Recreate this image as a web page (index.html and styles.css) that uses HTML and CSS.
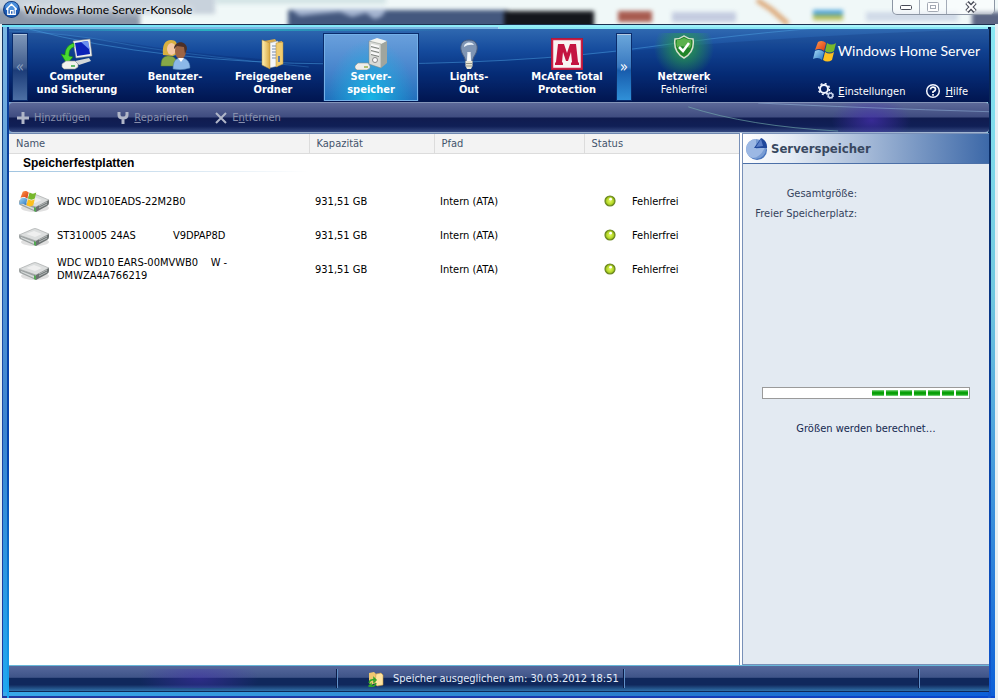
FILE: index.html
```html
<!DOCTYPE html>
<html lang="de">
  <head>
    <meta charset="UTF-8" />
    <meta name="viewport" content="width=device-width, initial-scale=1.0" />
    <title>Windows Home Server-Konsole</title>
    <link rel="stylesheet" href="styles.css">
  </head>
  <body>
    <!-- shared symbols -->
    <svg class="defs" width="0" height="0" aria-hidden="true">
      <defs>
        <linearGradient id="folderFill" x1="0" y1="0" x2="1" y2="0">
          <stop offset="0" stop-color="#fff0b4" />
          <stop offset="1" stop-color="#d9a840" />
        </linearGradient>
        <radialGradient id="ledFill" cx="0.5" cy="0.5" r="0.55">
          <stop offset="0" stop-color="#e4f860" />
          <stop offset="0.6" stop-color="#b4d828" />
          <stop offset="1" stop-color="#6c8c14" />
        </radialGradient>
        <linearGradient id="flagRed" x1="0" y1="0" x2="1" y2="1">
          <stop offset="0" stop-color="#ff9a4c" />
          <stop offset="1" stop-color="#d83810" />
        </linearGradient>
        <linearGradient id="flagBlue" x1="0" y1="0" x2="1" y2="1">
          <stop offset="0" stop-color="#a8dcf8" />
          <stop offset="1" stop-color="#2874c0" />
        </linearGradient>
      </defs>
      <symbol id="flag" viewBox="0 0 24 22">
        <path fill="url(#flagRed)" d="M5 2C8 0 11 1 13 3L11 11C9 9 6 8 2 10Z" />
        <path fill="#78b82c" d="M14 3C17 5 20 5 23 3L21 11C18 13 15 13 12 11Z" />
        <path fill="url(#flagBlue)" d="M2 11C6 9 8 10 11 12L9 20C7 18 4 17 0 19Z" />
        <path fill="#fcc020" d="M12 12C15 14 18 14 21 12L19 20C16 22 13 22 10 20Z" />
      </symbol>
      <symbol id="disk" viewBox="0 0 32 20">
        <ellipse cx="17" cy="15" rx="14" ry="4" fill="#000" opacity="0.12" />
        <path fill="#dcdede" stroke="#9a9e9e" stroke-width="0.6" d="M1 8L15 2Q17 1 19 2L31 7L18 14Z" />
        <path fill="#9da2a2" d="M1 8L18 14V19L2 12Q1 11 1 10Z" />
        <path fill="#6c7272" d="M18 14L31 7V10Q31 12 29 13L18 19Z" />
        <path fill="#d6dada" d="M3 10L16 15V17L3 11Z" />
        <path fill="#f6f6f6" d="M8 7L16 4L24 7L17 10Z" opacity="0.7" />
        <path fill="#52a852" d="M16 14L18 15V19L16 18Z" />
        <path stroke="#c8cccc" stroke-width="0.8" d="M21 13L29 9M21 15L29 11" />
      </symbol>
      <symbol id="led" viewBox="0 0 12 12">
        <circle cx="6" cy="6" r="5" fill="url(#ledFill)" stroke="#6c8820" stroke-width="1.2" />
        <circle cx="6.6" cy="4.2" r="1.4" fill="#fff" />
      </symbol>
    </svg>

    <div class="window">
      <header class="titlebar">
        <svg class="backdrop" aria-hidden="true">
          <rect x="0" y="0" width="100%" height="24" fill="#f0f8f8" />
          <g class="blur">
            <rect x="-10" y="-6" width="225" height="20" fill="#c8d2dc" />
            <rect x="-10" y="10" width="150" height="20" fill="#8c98aa" />
            <rect x="216" y="-6" width="170" height="10" fill="#d4e4e6" />
            <rect x="288" y="10" width="220" height="20" fill="#44587e" />
            <path d="M290 9H386Q384 18 374 19L366 13L352 17L340 12L318 14L300 16Z" fill="#a4b4d0" />
            <rect x="504" y="11" width="90" height="20" fill="#14161c" />
            <rect x="618" y="11" width="34" height="11" fill="#a85c50" />
            <rect x="672" y="12" width="64" height="10" fill="#c4cce0" />
            <path d="M757 0L772 10L788 24" stroke="#dca878" stroke-width="5" fill="none" />
            <rect x="813" y="10" width="30" height="5" fill="#4ea4d8" />
            <rect x="813" y="15" width="30" height="5" fill="#b4bc50" />
            <rect x="866" y="12" width="92" height="9" fill="#d0dae8" />
            <rect x="972" y="12" width="40" height="20" fill="#5c6684" />
          </g>
        </svg>
        <svg class="app-icon" viewBox="0 0 16 16" aria-hidden="true">
          <circle cx="8" cy="8" r="7.5" fill="#1a5ab4" stroke="#123c80" />
          <ellipse cx="8" cy="5" rx="6" ry="4" fill="#4c90dc" />
          <path d="M3 8L8 3L13 8M4.500 7V12.500H11.500V7M7 12V9H9.500V12" fill="none" stroke="#fff" stroke-width="1.200" />
        </svg>
        <h1>Windows Home Server-Konsole</h1>
        <div class="caption-buttons">
          <button type="button" aria-label="Minimieren">
            <svg width="14" height="8" viewBox="0 0 14 8"><rect x="1.500" y="2.500" width="11" height="4" rx="1" fill="#fff" stroke="#484c58" /></svg>
          </button>
          <button type="button" aria-label="Maximieren" disabled>
            <svg width="12" height="10" viewBox="0 0 12 10"><rect x="0.500" y="0.500" width="11" height="9" rx="1" fill="#fff" stroke="#a4aab4" /><rect x="3.500" y="3.500" width="5" height="3" fill="none" stroke="#a4aab4" /></svg>
          </button>
          <button type="button" class="close" aria-label="Schließen">
            <svg width="14" height="12" viewBox="0 0 14 12"><path d="M3 1.500L11 10.500M11 1.500L3 10.500" stroke="#484c58" stroke-width="4.500" /><path d="M3 2L11 10M11 2L3 10" stroke="#fff" stroke-width="2" /></svg>
          </button>
        </div>
      </header>

      <div class="frame">
        <div class="ribbon">
          <svg class="swoosh" viewBox="0 0 981 73" preserveAspectRatio="none" aria-hidden="true">
            <path d="M0 0L120 14Q210 30 330 34T620 22T981 0V73H0Z" fill="#001050" opacity="0.16" />
            <path d="M20 0Q150 34 330 35T640 18T860 -4" fill="none" stroke="#4ca0e0" stroke-width="1" opacity="0.5" />
            <path d="M0 2Q60 4 110 14T300 38" fill="none" stroke="#4ca0e0" stroke-width="1" opacity="0.3" />
          </svg>
          <button type="button" class="scroll" aria-label="Zurück" disabled>«</button>
          <nav class="tabs">
            <button type="button" class="tab">
              <svg viewBox="0 0 32 32" aria-hidden="true">
                <path d="M12 3L29 1L31 18L15 20Z" fill="#eef0ee" stroke="#888" stroke-width="0.500" />
                <path d="M14 5L27 3L29 16L16 18Z" fill="#0c22b8" />
                <path d="M20 4L27 3L29 12Z" fill="#6c90f0" />
                <path d="M14 23L28 20L30 23L18 27Z" fill="#d4d8d8" />
                <path d="M13 5C6 7 4 12 4 17L0 16L6 26L12 19L8 18C8 13 9 10 13 9Z" fill="#48d830" stroke="#168010" stroke-width="0.600" />
                <path d="M1 26L5 23H14L17 26V29L14 31H3L1 29Z" fill="#f2f2ec" stroke="#9a9c98" stroke-width="0.600" />
                <path d="M10 28H14" stroke="#34a840" stroke-width="1.500" />
              </svg>
              <span>Computer<br>und Sicherung</span>
            </button>
            <button type="button" class="tab">
              <svg viewBox="0 0 32 32" aria-hidden="true">
                <path d="M2 28C2 20 5 18 10 18S18 21 19 28Z" fill="#86a848" stroke="#5c7c28" stroke-width="0.500" />
                <path d="M4 17C3 7 6 2 12 2S19 6 18 16L14 18Z" fill="#d8b040" />
                <ellipse cx="12.500" cy="11" rx="4.500" ry="6" fill="#f4c8a4" />
                <path d="M14 31C14 23 17 20 22 20S31 23 31 30Q23 33 14 31Z" fill="#8cb8e8" stroke="#4c7cac" stroke-width="0.500" />
                <ellipse cx="21.500" cy="13" rx="5.500" ry="8" fill="#9c6444" />
                <path d="M15 11C15 2 28 2 28 11L26 16L25 9L18 8Z" fill="#4c3028" />
                <path d="M19 20L22 24L25 20Z" fill="#fff" />
              </svg>
              <span>Benutzer-<br>konten</span>
            </button>
            <button type="button" class="tab">
              <svg viewBox="0 0 32 32" aria-hidden="true">
                <path d="M7 3L18 1L20 4L25 3V25L18 29Z" fill="#d8aa4c" />
                <path d="M12 5L21 3V28L12 30Z" fill="#f4f6fa" stroke="#9aa4ac" stroke-width="0.500" />
                <path d="M15 8H19M15 11H19M15 14H19M15 17H19M15 20H19" stroke="#788cac" />
                <path d="M5 2L13 5V31L5 27Z" fill="url(#folderFill)" stroke="#b48c38" stroke-width="0.500" />
                <path d="M19 5L26 4V26L19 29Z" fill="#f0cc70" stroke="#b48c38" stroke-width="0.500" />
                <path d="M22 18V24" stroke="#607ca8" stroke-width="2" />
              </svg>
              <span>Freigegebene<br>Ordner</span>
            </button>
            <button type="button" class="tab active" aria-current="page">
              <svg viewBox="0 0 32 32" aria-hidden="true">
                <path d="M14 3L22 0L32 3L26 7Z" fill="#f4f4f0" />
                <path d="M14 3L26 6V30L14 26Z" fill="#d8dad6" stroke="#82867f" stroke-width="0.500" />
                <path d="M26 6L32 3V25L26 30Z" fill="#a0a59e" />
                <path d="M16 7L24 9M16 11L24 13M16 15L24 17" stroke="#fafafa" stroke-width="2.500" />
                <path d="M16 8.500L24 10.500M16 12.500L24 14.500M16 16.500L24 18.500" stroke="#7c807c" />
                <circle cx="20" cy="22" r="2.500" fill="#fafafa" stroke="#888" />
                <path d="M0 28L3 25H13L15 28V30L12 32H2L0 30Z" fill="#eeeeea" stroke="#92968e" stroke-width="0.600" />
                <path d="M9 29H13" stroke="#9cb048" stroke-width="1.500" />
              </svg>
              <span>Server-<br>speicher</span>
            </button>
            <button type="button" class="tab">
              <svg viewBox="0 0 32 32" aria-hidden="true">
                <path d="M16 2C9 2 7 7 8 12C9 17 12 18 12.500 24H19.500C20 18 23 17 24 12C25 7 23 2 16 2Z" fill="#7f95b4" stroke="#45597c" />
                <path d="M11 9C11 4 19 3 21 7Q15 6 11 9Z" fill="#e8f0f8" />
                <path d="M14.500 23L15 14L16 16L17 14L17.500 23" fill="#f4f8fc" stroke="#f4f8fc" />
                <path d="M12.500 23H19.500V28L18 31H14L12.500 28Z" fill="#e6e4d4" />
                <path d="M12.500 25.500H19.500M12.500 28H19.500" stroke="#94968c" />
              </svg>
              <span>Lights-<br>Out</span>
            </button>
            <button type="button" class="tab">
              <svg viewBox="0 0 32 32" aria-hidden="true">
                <rect x="0.500" y="0.500" width="31" height="31" fill="#f8f4f2" stroke="#a81838" />
                <rect x="1.500" y="1.500" width="29" height="29" fill="none" stroke="#cc2048" stroke-width="1.500" />
                <path d="M4 27V25L5 24L7 6H13L16 15L19 6H25L27 24L28 25V27H20V25L21 24L20 14L17 23H15L12 14L11 24L12 25V27Z" fill="#c41440" />
              </svg>
              <span>McAfee Total<br>Protection</span>
            </button>
          </nav>
          <button type="button" class="scroll next" aria-label="Weiter">»</button>
          <button type="button" class="network">
            <svg viewBox="0 0 22 24" aria-hidden="true">
              <path d="M11 1Q15 4 20 4Q22 17 11 23Q0 17 2 4Q7 4 11 1Z" fill="#1f8428" stroke="#d8e0d0" stroke-width="1.500" />
              <path d="M11 3Q15 5 18 5Q19 10 17 13Q10 10 4 12Q3 9 4 5Q7 5 11 3Z" fill="#74c45c" opacity="0.700" />
              <path d="M6 12L10 16L16 8" fill="none" stroke="#fff" stroke-width="2.500" />
            </svg>
            <strong>Netzwerk</strong>
            <span>Fehlerfrei</span>
          </button>
          <div class="brand">
            <div class="logo">
              <svg width="24" height="22" aria-hidden="true"><use href="#flag" /></svg>
              <span>Windows Home Server</span>
            </div>
            <div class="links">
              <a href="#einstellungen">
                <svg width="16" height="16" viewBox="0 0 16 16" aria-hidden="true">
                  <circle cx="6" cy="6" r="4" fill="none" stroke="#f0f4ff" stroke-width="2" />
                  <circle cx="6" cy="6" r="5.500" fill="none" stroke="#f0f4ff" stroke-width="1.500" stroke-dasharray="2 2.320" />
                  <circle cx="12.500" cy="12.500" r="2.200" fill="none" stroke="#c8d4ec" stroke-width="1.500" />
                  <circle cx="12.500" cy="12.500" r="3.200" fill="none" stroke="#c8d4ec" stroke-dasharray="1.300 1.200" />
                </svg>
                <span><u>E</u>instellungen</span>
              </a>
              <a href="#hilfe">
                <svg width="16" height="16" viewBox="0 0 16 16" aria-hidden="true">
                  <circle cx="8" cy="8" r="6.300" fill="none" stroke="#f4f6ff" stroke-width="1.500" />
                  <path d="M5.500 6.500Q5.500 4.200 8 4.200T10.500 6.400Q10.500 7.600 8 8.800V10M8 11V12.700" fill="none" stroke="#fff" stroke-width="1.700" />
                </svg>
                <span><u>H</u>ilfe</span>
              </a>
            </div>
          </div>
        </div>

        <div class="toolbar">
          <svg class="swoosh" viewBox="0 0 981 30" preserveAspectRatio="none" aria-hidden="true">
            <path d="M680 4Q740 24 830 29" fill="none" stroke="#78b4b0" opacity="0.600" />
            <path d="M750 0Q850 5 981 9" fill="none" stroke="#98bce0" opacity="0.500" />
          </svg>
          <button type="button" disabled>
            <svg width="14" height="14" viewBox="0 0 14 14" aria-hidden="true"><path d="M7 1V13M1 7H13" stroke="currentColor" stroke-width="3" /></svg>
            <span>H<u>i</u>nzufügen</span>
          </button>
          <button type="button" disabled>
            <svg width="14" height="14" viewBox="0 0 14 14" aria-hidden="true"><path d="M3 1V4Q3 7 7 7T11 4V1M7 6V13" fill="none" stroke="currentColor" stroke-width="3" /></svg>
            <span><u>R</u>eparieren</span>
          </button>
          <button type="button" disabled>
            <svg width="14" height="14" viewBox="0 0 14 14" aria-hidden="true"><path d="M2 2L12 12M12 2L2 12" stroke="currentColor" stroke-width="2" /></svg>
            <span>E<u>n</u>tfernen</span>
          </button>
        </div>

        <main class="content">
          <section class="list">
            <table>
              <colgroup>
                <col class="col-name">
                <col class="col-size">
                <col class="col-path">
                <col>
              </colgroup>
              <thead>
                <tr>
                  <th scope="col">Name</th>
                  <th scope="col">Kapazität</th>
                  <th scope="col">Pfad</th>
                  <th scope="col">Status</th>
                </tr>
              </thead>
              <tbody>
                <tr class="group">
                  <th colspan="4" scope="rowgroup">Speicherfestplatten</th>
                </tr>
                <tr>
                  <td>
                    <div class="drive">
                      <svg width="32" height="24" viewBox="0 0 32 24" aria-hidden="true">
                        <use href="#disk" y="4" width="32" height="20" />
                        <use href="#flag" x="1" y="1" width="18" height="17" />
                      </svg>
                      <span>WDC WD10EADS-22M2B0</span>
                    </div>
                  </td>
                  <td>931,51 GB</td>
                  <td>Intern (ATA)</td>
                  <td><div class="status"><svg width="12" height="12" aria-hidden="true"><use href="#led" /></svg>Fehlerfrei</div></td>
                </tr>
                <tr>
                  <td>
                    <div class="drive">
                      <svg width="32" height="24" viewBox="0 0 32 24" aria-hidden="true"><use href="#disk" y="4" width="32" height="20" /></svg>
                      <span class="split"><span>ST310005 24AS</span> <span>V9DPAP8D</span></span>
                    </div>
                  </td>
                  <td>931,51 GB</td>
                  <td>Intern (ATA)</td>
                  <td><div class="status"><svg width="12" height="12" aria-hidden="true"><use href="#led" /></svg>Fehlerfrei</div></td>
                </tr>
                <tr>
                  <td>
                    <div class="drive">
                      <svg width="32" height="24" viewBox="0 0 32 24" aria-hidden="true"><use href="#disk" y="4" width="32" height="20" /></svg>
                      <span>WDC WD10 EARS-00MVWB0&nbsp;&nbsp;&nbsp; W -<br>DMWZA4A766219</span>
                    </div>
                  </td>
                  <td>931,51 GB</td>
                  <td>Intern (ATA)</td>
                  <td><div class="status"><svg width="12" height="12" aria-hidden="true"><use href="#led" /></svg>Fehlerfrei</div></td>
                </tr>
              </tbody>
            </table>
          </section>

          <aside class="details">
            <h2>
              <svg width="24" height="24" viewBox="0 0 24 24" aria-hidden="true">
                <circle cx="12" cy="13" r="10" fill="#4874bc" />
                <circle cx="11" cy="12" r="10" fill="#789cd4" />
                <path d="M11 12V2A10 10 0 0 0 1 12A10 10 0 0 0 8 21Q16 20 20 10Z" fill="#9cb8e4" />
                <path d="M9 11L16 1A10 10 0 0 1 22 11Z" fill="#20489c" />
                <path d="M11 10L16 2L18 9Z" fill="#5c80c8" />
              </svg>
              Serverspeicher
            </h2>
            <dl>
              <dt>Gesamtgröße:</dt>
              <dd></dd>
              <dt>Freier Speicherplatz:</dt>
              <dd></dd>
            </dl>
            <div class="calc">
              <div class="progress" role="progressbar" aria-labelledby="calc-text">
                <i></i><i></i><i></i><i></i><i></i><i></i><i></i>
              </div>
              <p id="calc-text">Größen werden berechnet…</p>
            </div>
          </aside>
        </main>

        <footer class="statusbar">
          <div class="pane first"></div>
          <div class="pane message">
            <svg width="16" height="16" viewBox="0 0 16 16" aria-hidden="true">
              <path d="M1 2L6 1L8 3V12L3 14L1 12Z" fill="#f0c870" />
              <path d="M8 3L13 2L15 4V14L9 15L7 13Z" fill="#ffe4a0" stroke="#c49844" stroke-width="0.600" />
              <path d="M1 12Q2 8 6 9M6 7V11L8 9ZM8 12Q7 16 3 15M3 13V16L1 15Z" fill="none" stroke="#30a428" stroke-width="1.500" />
            </svg>
            <span>Speicher ausgeglichen am: 30.03.2012 18:51</span>
          </div>
          <div class="pane rest"></div>
          <div class="pane grip"></div>
        </footer>
      </div>
    </div>
  </body>
</html>
```

FILE: styles.css
```css
* {
  box-sizing: border-box;
  margin: 0;
  padding: 0;
}
body {
  font: 11px/13px "DejaVu Sans Condensed", "DejaVu Sans", sans-serif;
  color: #000;
  background: #e4eef2;
}
button {
  font: inherit;
  color: inherit;
  background: none;
  border: 0;
}
.defs {
  position: absolute;
}
.window {
  display: flex;
  flex-direction: column;
  min-height: 100vh;
  padding: 0 3px 2px 2px;
}

/* title bar */
.titlebar {
  display: flex;
  align-items: flex-start;
  height: 24px;
  gap: 4px;
  padding-left: 1px;
}
.titlebar h1 {
  flex: 1;
  font: 12px/20px Lato, "Open Sans", sans-serif;
  color: #000;
  text-shadow: 0 0 6px #fff, 0 0 10px #fff;
  position: relative;
}
.backdrop {
  position: absolute;
  top: 0;
  left: 0;
  width: 100%;
  height: 24px;
}
.blur {
  filter: blur(2px);
}
.app-icon {
  width: 17px;
  height: 17px;
  margin-top: 1px;
  position: relative;
}
.caption-buttons {
  display: flex;
  height: 15px;
  position: relative;
  border: 1px solid #8c96a4;
  border-top: 0;
  border-radius: 0 0 5px 5px;
  background: rgba(255, 255, 255, 0.5);
}
.caption-buttons button {
  display: flex;
  align-items: center;
  justify-content: center;
  width: 27px;
  height: 14px;
  border-right: 1px solid #a4acb8;
}
.caption-buttons .close {
  width: 47px;
  border-right: 0;
}

/* glass border round the client area */
.frame {
  flex: 1;
  display: flex;
  flex-direction: column;
  padding: 4px 6px 6px 7px;
  border-top: 1px solid #1c3050;
  background:
    linear-gradient(90deg, #6ee2f6, #b4f8fc) top / 100% 2px no-repeat,
    linear-gradient(#10305c, #1850a8 30%, #2038a0) left / 1px 100% no-repeat,
    linear-gradient(#0c3c94, #0444b0 65%, #18a8f0) 5px 0 / 2px 100% no-repeat,
    linear-gradient(#082048, #0840a0 60%, #1058d0) calc(100% - 4px) 0 / 3px 100% no-repeat,
    linear-gradient(90deg, #2038a0, #1838b0 60%, #0848d0) bottom / 100% 2px no-repeat,
    linear-gradient(90deg, #38a8e8, #2c80cc 60%, #0c60d8) 0 calc(100% - 2px) / 100% 4px no-repeat,
    linear-gradient(#7cb8e4, #5c9cd8 25%, #3c84d0 60%, #20a8f0) left / 50% 100% no-repeat,
    linear-gradient(#8ae8f4, #70c8e0 40%, #0c60d8) right / 50% 100% no-repeat;
}

/* ribbon */
.ribbon {
  display: flex;
  height: 73px;
  padding: 4px 0 0 3px;
  position: relative;
  color: #fff;
  background:
    linear-gradient(90deg, transparent, #28b0c0 20%, transparent 45%) top / 100% 2px no-repeat,
    linear-gradient(#2f68b0, #144a9c 30%, #07307c 62%, #021650);
}
.ribbon > * {
  position: relative;
}
.ribbon > .swoosh,
.toolbar > .swoosh {
  position: absolute;
  top: 0;
  left: 0;
  width: 100%;
  height: 100%;
}
.scroll {
  width: 16px;
  height: 68px;
  border: 1px solid #0a2c6c;
  color: #8ca0c0;
  font-size: 15px;
  background: linear-gradient(#8099bb, #405c8c 50%, #1c3c78 55%, #4c6fa4);
  box-shadow: inset 0 1px #b4c8e0;
}
.scroll.next {
  color: #fff;
  background: linear-gradient(#6ca8dc, #3878c0 50%, #185cac 55%, #3090d8);
}
.tabs {
  display: flex;
}
.tab {
  display: flex;
  flex-direction: column;
  align-items: center;
  width: 98px;
  height: 68px;
  padding-top: 5px;
  font-weight: bold;
}
.tab svg {
  width: 32px;
  height: 32px;
}
.tab span {
  white-space: nowrap;
}
.tab.active {
  width: 96px;
  margin: 0 1px;
  border: 1px solid #0a2c6c;
  border-bottom: 0;
  padding-top: 4px;
  background:
    radial-gradient(ellipse at 50% 95%, #18b4e4, transparent 65%),
    linear-gradient(#6aa0dc, #4684cc 55%, #2070bc);
  box-shadow: inset 0 0 0 1px #74b0e8;
}
.network {
  display: flex;
  flex-direction: column;
  align-items: center;
  width: 104px;
  padding-top: 2px;
  background: radial-gradient(circle at 50% 15px, #2aa048, transparent 30px);
}
.network svg {
  width: 22px;
  height: 24px;
  margin-bottom: 11px;
}
.brand {
  margin-left: auto;
  padding: 5px 9px 0 0;
}
.logo {
  display: flex;
  align-items: center;
  gap: 1px;
  height: 25px;
  font: 14px/20px Lato, "Open Sans", sans-serif;
  white-space: nowrap;
}
.links {
  display: flex;
  justify-content: flex-end;
  gap: 20px;
  padding: 20px 12px 0 0;
}
.links a {
  display: flex;
  align-items: center;
  gap: 4px;
  color: #fff;
  text-decoration: none;
}

/* toolbar */
.toolbar {
  display: flex;
  align-items: center;
  gap: 26px;
  height: 31px;
  padding-left: 7px;
  position: relative;
  border-top: 1px solid #8494b8;
  border-bottom: 1px solid #a0b4d0;
  border-radius: 4px;
  background:
    radial-gradient(ellipse 40px 24px at 88% 60%, rgba(72, 48, 176, 0.7), transparent),
    linear-gradient(#5c6898, #3f4c80 48%, #101c50 52%, #101f56 80%, #344880);
}
.toolbar button {
  display: flex;
  align-items: center;
  gap: 4px;
  color: #8890ac;
}
.toolbar button svg {
  color: #b0b6c8;
}

/* content */
.content {
  flex: 1;
  display: flex;
  gap: 2px;
  background: #fff;
}
.list {
  flex: 1;
  border-top: 1px solid #7088b0;
  border-right: 1px solid #7890b8;
}
table {
  width: 100%;
  border-collapse: collapse;
  table-layout: fixed;
}
.col-name {
  width: 300px;
}
.col-size {
  width: 125px;
}
.col-path {
  width: 150px;
}
thead th {
  height: 19px;
  padding: 0 7px;
  text-align: left;
  font-weight: normal;
  color: #44546c;
  background: #f3f3f3;
  border-bottom: 1px solid #dcdcdc;
  border-right: 1px solid #dcdcdc;
}
thead th:last-child {
  border-right: 0;
}
.group th {
  height: 19px;
  padding-left: 14px;
  text-align: left;
  font: bold 12px/18px "Liberation Sans", Arial, sans-serif;
  background: linear-gradient(90deg, #a0c4e0, #fff) bottom left / 300px 1px no-repeat;
}
tbody td {
  height: 34px;
  padding: 0 6px;
}
.group + tr td {
  height: 46px;
  padding-top: 12px;
}
.drive {
  display: flex;
  align-items: center;
  gap: 7px;
  padding-left: 3px;
}
.drive svg {
  flex: none;
}
.split {
  display: flex;
  gap: 37px;
}
.status {
  display: flex;
  align-items: center;
  gap: 16px;
  padding-left: 14px;
}

/* details */
.details {
  width: 247px;
  border: 1px solid #7890b8;
  border-right: 0;
  background: #e3eaf2;
  color: #34425c;
}
.details h2 {
  display: flex;
  align-items: center;
  gap: 2px;
  height: 30px;
  padding-left: 2px;
  font-size: 13px;
  color: #384860;
  border-bottom: 1px solid #4c70a8;
  background: linear-gradient(90deg, #fff, #e4ebf4 20%, #3c68a8);
}
.details dl {
  display: grid;
  grid-template-columns: 114px 1fr;
  row-gap: 7px;
  padding-top: 23px;
}
.details dt {
  text-align: right;
  white-space: nowrap;
}
.calc {
  padding: 167px 19px 0;
}
.progress {
  display: flex;
  justify-content: flex-end;
  gap: 2px;
  height: 12px;
  padding: 2px 1px;
  border: 1px solid #9a9a9a;
  background: #fff;
}
.progress i {
  width: 12px;
  background: linear-gradient(#8cdc8c, #08a008 35%, #08a008 70%, #8cdc8c);
}
.calc p {
  margin-top: 23px;
  text-align: center;
  color: #142850;
}

/* status bar */
.statusbar {
  display: flex;
  height: 27px;
  border-top: 1px solid #68b8d8;
  border-bottom: 1px solid #102858;
  color: #e4ecf8;
  background: linear-gradient(#56689c, #3f5488 45%, #10285c 50%, #10285c 75%, #3070a8);
}
.pane {
  display: flex;
  align-items: center;
  gap: 9px;
  margin: 3px 0;
  border-right: 1px solid #6090c8;
  box-shadow: inset -1px 0 #0c1c48;
}
.pane.first {
  width: 329px;
  background: radial-gradient(ellipse 60px 24px at 190px 50%, rgba(72, 48, 176, 0.5), transparent);
}
.pane.message {
  width: 287px;
  padding-left: 30px;
  white-space: nowrap;
}
.pane.rest {
  flex: 1;
}
.pane.grip {
  width: 69px;
  border: 0;
  box-shadow: none;
}
```
